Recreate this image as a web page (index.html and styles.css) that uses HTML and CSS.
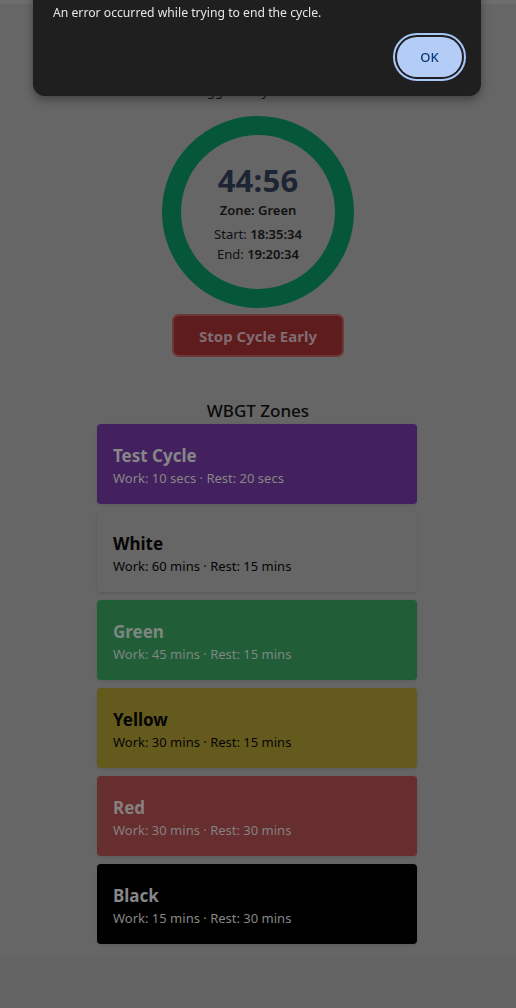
FILE: index.html
```html
<!DOCTYPE html>
<html lang="en">
<head>
<meta charset="utf-8">
<title>WBGT Cycle Timer</title>
<link rel="stylesheet" href="styles.css">
</head>
<body>
<div class="topbar"></div>
<main class="page">
  <p class="trigger">Triggered by: Green</p>
  <div class="ring">
    <div class="timer">44:56</div>
    <div class="zone">Zone: Green</div>
    <div class="time">Start: <b>18:35:34</b></div>
    <div class="time">End: <b>19:20:34</b></div>
  </div>
  <button class="stop">Stop Cycle Early</button>
  <h2 class="zones-title">WBGT Zones</h2>
  <div class="zones">
    <div class="card card-test"><div class="card-title">Test Cycle</div><div class="card-sub">Work: 10 secs · Rest: 20 secs</div></div>
    <div class="card card-white"><div class="card-title">White</div><div class="card-sub">Work: 60 mins · Rest: 15 mins</div></div>
    <div class="card card-green"><div class="card-title">Green</div><div class="card-sub">Work: 45 mins · Rest: 15 mins</div></div>
    <div class="card card-yellow"><div class="card-title">Yellow</div><div class="card-sub">Work: 30 mins · Rest: 15 mins</div></div>
    <div class="card card-red"><div class="card-title">Red</div><div class="card-sub">Work: 30 mins · Rest: 30 mins</div></div>
    <div class="card card-black"><div class="card-title">Black</div><div class="card-sub">Work: 15 mins · Rest: 30 mins</div></div>
  </div>
</main>
<footer class="footer"></footer>
<div class="dialog" role="alertdialog">
  <p class="dialog-text">An error occurred while trying to end the cycle.</p>
  <div class="dialog-actions"><button class="ok">OK</button></div>
</div>
</body>
</html>
```
FILE: styles.css
```css
html, body {
  margin: 0;
  padding: 0;
}
body {
  background: #666666;
  font-family: "Noto Sans", "Open Sans", sans-serif;
  color: #111111;
  width: 516px;
  height: 1008px;
  overflow: hidden;
}
.topbar {
  height: 4px;
  background: #6e6e6e;
}
.page {
  display: flex;
  flex-direction: column;
  align-items: center;
  padding-top: 78px;
  height: 876px;
  box-sizing: content-box;
}
.trigger {
  margin: 0 0 0 -12px;
  font-size: 13px;
  line-height: 18px;
  color: #111;
}
.ring {
  margin-top: 16px;
  width: 192px;
  height: 192px;
  box-sizing: border-box;
  border: 19px solid #06573a;
  border-radius: 50%;
  display: flex;
  flex-direction: column;
  align-items: center;
  justify-content: center;
  padding-top: 0;
}
.timer {
  font-size: 31px;
  font-weight: 700;
  line-height: 38px;
  color: #1d2534;
  letter-spacing: 0.2px;
}
.zone {
  margin-top: 2px;
  font-size: 13px;
  font-weight: 600;
  line-height: 18px;
  color: #111;
}
.time {
  font-size: 13px;
  line-height: 20px;
  color: #111;
}
.zone + .time { margin-top: 5px; }
.time b { font-weight: 600; }
.stop {
  margin-top: 6px;
  width: 172px;
  height: 43px;
  background: #5f1c1c;
  border: 2px solid #6d3637;
  border-radius: 7px;
  color: #7f6d73;
  font-family: "Noto Sans", sans-serif;
  font-weight: 700;
  font-size: 15px;
}
.zones-title {
  margin: 43px 0 0;
  font-size: 17px;
  font-weight: 500;
  line-height: 22px;
  color: #0a0a0a;
}
.zones {
  margin-top: 2px;
  width: 320px;
  display: flex;
  flex-direction: column;
  gap: 8px;
  margin-left: -2px;
}
.card {
  height: 80px;
  box-sizing: border-box;
  padding: 20px 16px 16px;
  border-radius: 4px;
  box-shadow: 0 1px 3px rgba(0, 0, 0, 0.12);
  color: #878787;
}
.card-title {
  font-size: 17px;
  font-weight: 700;
  line-height: 24px;
}
.card-sub {
  font-size: 13px;
  line-height: 20px;
}
.card-test { background: #43215f; }
.card-white { background: #666666; color: #050505; box-shadow: 0 1px 3px rgba(0,0,0,0.15); }
.card-green { background: #215e38; color: #7d8680; }
.card-yellow { background: #655a1d; color: #050505; }
.card-red { background: #662e2e; color: #878080; }
.card-black { background: #000000; color: #878787; }
.footer {
  height: 50px;
  background: #636463;
}
.dialog {
  position: fixed;
  left: 33px;
  top: -24px;
  width: 448px;
  height: 120px;
  box-sizing: border-box;
  background: #1f1f1f;
  border-radius: 12px;
  box-shadow: 0 4px 10px rgba(0, 0, 0, 0.35);
  padding: 28px 18px 0 20px;
  display: flex;
  flex-direction: column;
}
.dialog-text {
  margin: 0;
  font-family: "Noto Sans", sans-serif;
  font-size: 12.2px;
  line-height: 18px;
  color: #e6e6e6;
}
.dialog-actions {
  display: flex;
  justify-content: flex-end;
  margin-top: 15px;
}
.ok {
  width: 65px;
  height: 40px;
  border: none;
  border-radius: 20px;
  background: #b4cdf6;
  color: #0b3a7a;
  font-family: "Noto Sans", sans-serif;
  font-size: 13px;
  font-weight: 500;
  outline: 2px solid #a8c7fa;
  outline-offset: 2px;
  margin-right: 1px;
}
```
